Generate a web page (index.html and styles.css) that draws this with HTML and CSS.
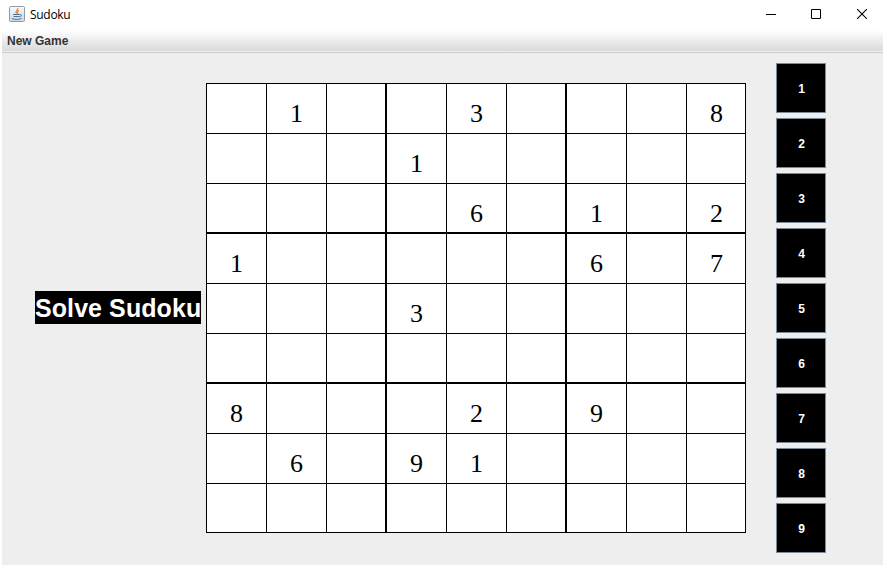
FILE: index.html
```html
<!DOCTYPE html>
<html lang="en">
<head>
<meta charset="utf-8">
<title>Sudoku</title>
<link rel="stylesheet" href="styles.css">
</head>
<body>
<header class="titlebar">
  <svg class="app-icon" width="16" height="16" viewBox="0 0 16 16" fill="none">
    <defs><linearGradient id="tile" x1="0" y1="0" x2="0" y2="1"><stop offset="0" stop-color="#fafbfc"/><stop offset="1" stop-color="#ccd5dd"/></linearGradient></defs>
    <rect x=".5" y=".5" width="15" height="15" rx="1" fill="url(#tile)" stroke="#8f9ba7"/>
    <path d="M8.8 2C9.5 4 5.6 4.4 7.4 7.6M9.9 4.2C7.6 5.2 9.6 6 8.2 7.8" stroke="#e8792b" stroke-width="1.1"/>
    <path d="M4 8.5h6.5M4.6 10.5h5.4M10.6 8.5c2.6-.5 2.3 1.9-.4 2.3M3 12.5c2 1.3 7.5 1.2 9.5-.2" stroke="#4d7598"/>
  </svg>
  <span class="title">Sudoku</span>
  <div class="controls">
    <svg width="10" height="10" viewBox="0 0 10 10"><path d="M0 5.5h10" stroke="#000"/></svg>
    <svg width="10" height="10" viewBox="0 0 10 10"><path d="M.5.5h9v9h-9z" fill="none" stroke="#000"/></svg>
    <svg width="10" height="10" viewBox="0 0 10 10"><path d="M0 0l10 10M10 0L0 10" stroke="#000" stroke-width="1.1"/></svg>
  </div>
</header>
<nav class="menubar"><span class="menu-item">New Game</span></nav>
<main class="content">
  <h1 class="solve">Solve Sudoku</h1>
  <div class="board" id="board"></div>
  <div class="keys" id="keys"></div>
</main>
<script src="app.js"></script>
</body>
</html>
```
FILE: styles.css
```css
* { box-sizing: border-box; }
body {
  margin: 0;
  width: 883px;
  height: 565px;
  padding-left: 2px;
  display: flex;
  flex-direction: column;
  overflow: hidden;
  background: #fff;
  font-family: "Liberation Sans", Arial, sans-serif;
}
.titlebar {
  height: 30px;
  flex: none;
  display: flex;
  align-items: center;
  padding: 0 16px 2px 7px;
}
.title {
  margin: 1px 0 0 5px;
  font: 12px/16px "Open Sans", sans-serif;
  letter-spacing: -0.3px;
  color: #000;
}
.controls { margin-left: auto; display: flex; }
.controls svg { display: block; margin-left: 35px; }
.controls svg:last-child { margin-left: 36px; }
.menubar {
  height: 23px;
  flex: none;
  padding-left: 5px;
  border-bottom: 1px solid #ccc;
  background: linear-gradient(#fff, #dadada 21px, #eee 21px);
}
.menu-item {
  display: block;
  font-size: 12px;
  line-height: 22px;
  font-weight: bold;
  color: #333;
}
.content {
  flex: 1;
  display: flex;
  align-items: flex-start;
  background: #eee;
  padding: 10px 0 0 33px;
}
.solve {
  margin: 228px 5px 0 0;
  width: 166px;
  height: 33px;
  background: #000;
  color: #fff;
  font-size: 25px;
  line-height: 34px;
  letter-spacing: 0.08px;
  white-space: nowrap;
}
.board {
  margin-top: 20px;
  display: grid;
  grid-template-columns: repeat(9, 60px);
  grid-template-rows: repeat(9, 50px);
  background: #fff;
}
.cell {
  border: solid #000;
  border-width: 1px 0 0 1px;
  font: 26px/32px "Liberation Serif", "Times New Roman", serif;
  padding: 14px 0 0 23px;
  color: #000;
}
.cell.right { border-right-width: 1px; }
.cell.bottom { border-bottom-width: 1px; }
.keys {
  margin-left: 30px;
  display: flex;
  flex-direction: column;
  gap: 5px;
}
.key {
  width: 50px;
  height: 50px;
  padding: 2px 0 0 1px;
  border: 1px solid #7a8a99;
  background: #000;
  color: #fff;
  font: bold 12px/46px "Liberation Sans", Arial, sans-serif;
}
```
FILE: app.js
```js
const rows = [
  ".1..3...8",
  "...1.....",
  "....6.1.2",
  "1.....6.7",
  "...3.....",
  ".........",
  "8...2.9..",
  ".6.91....",
  "........."
];
const board = document.getElementById("board");
rows.forEach((row, r) => {
  [...row].forEach((value, c) => {
    const cell = document.createElement("div");
    cell.className = "cell";
    if (c % 3 === 2) cell.classList.add("right");
    if (r % 3 === 2) cell.classList.add("bottom");
    if (value !== ".") cell.textContent = value;
    board.append(cell);
  });
});
const keys = document.getElementById("keys");
for (let n = 1; n <= 9; n++) {
  const key = document.createElement("button");
  key.className = "key";
  key.textContent = n;
  keys.append(key);
}
```
